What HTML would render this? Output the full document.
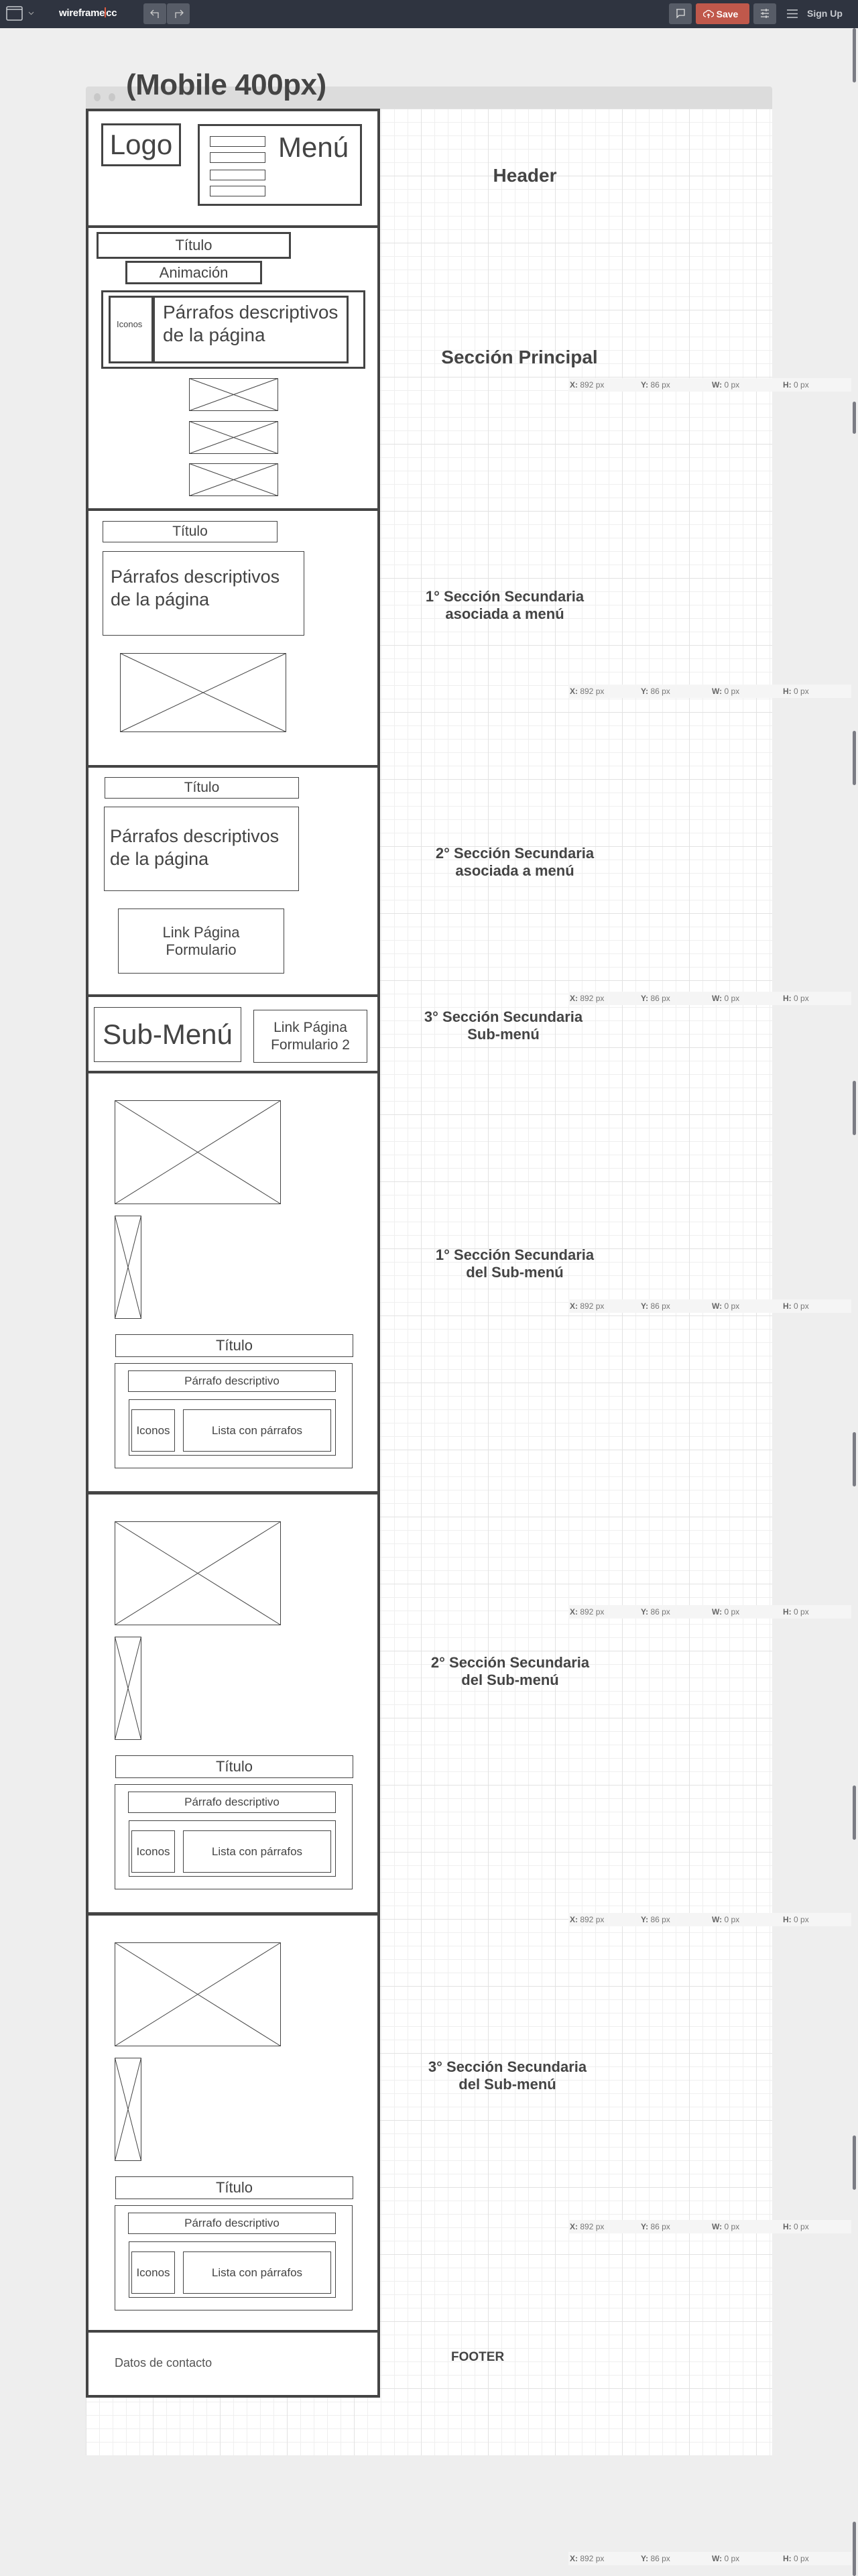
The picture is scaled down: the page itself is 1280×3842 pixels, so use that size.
<!DOCTYPE html>
<html><head><meta charset="utf-8"><style>
*{margin:0;padding:0;box-sizing:border-box}
body{width:1280px;height:3842px;background:#eeeeee;position:relative;overflow:hidden;font-family:"Liberation Sans",Arial,sans-serif;color:#444}
.a{position:absolute}
.top{left:0;top:0;width:1280px;height:42px;background:#2f3440}
.btn{position:absolute;top:5px;height:31px;background:#575c67;border-radius:3px}
.grid{left:128px;top:162px;width:1024px;height:3500px;background-color:#fff;
background-image:linear-gradient(to right,#e2e2e2 1px,transparent 1px),linear-gradient(to bottom,#e2e2e2 1px,transparent 1px),linear-gradient(to right,#efefef 1px,transparent 1px),linear-gradient(to bottom,#efefef 1px,transparent 1px);
background-size:100px 100px,100px 100px,20px 20px,20px 20px}
.sec{position:absolute;left:128px;width:439px;border:4px solid #444;background:#fff}
.b1{position:absolute;border:1px solid #444;background:#fff}
.b3{position:absolute;border:3px solid #444;background:#fff}
.c{display:flex;align-items:center;justify-content:center;text-align:center}
.lbl{position:absolute;font-weight:bold;text-align:center;color:#444;line-height:26px}
.coord{position:absolute;left:848px;width:422px;height:20px;background:#f5f5f5;font-size:12px;color:#777;line-height:20px}
.coord span{position:absolute}
.coord b{color:#666}
.sb{position:absolute;left:1272px;width:5px;background:#7b7c84;border-radius:3px}
svg.ph{position:absolute}
</style></head><body>
<div class="a top">
  <svg class="a" style="left:9px;top:9px" width="26" height="23" viewBox="0 0 26 23"><rect x="1" y="1" width="23" height="20" rx="2" fill="none" stroke="#c8cbd0" stroke-width="1.5"/><line x1="1" y1="5" x2="24" y2="5" stroke="#c8cbd0" stroke-width="1.5"/></svg>
  <svg class="a" style="left:42px;top:17px" width="9" height="6"><path d="M1 1 L4.5 4.5 L8 1" fill="none" stroke="#aaa" stroke-width="1"/></svg>
  <div class="a" style="left:88px;top:11px;font-size:15px;font-weight:bold;color:#fff;letter-spacing:-0.3px">wireframe<span style="display:inline-block;width:2px;height:15px;background:#e05a40;vertical-align:-2px"></span>cc</div>
  <div class="btn" style="left:214px;width:34px"></div><div class="btn" style="left:249px;width:34px"></div>
  <svg class="a" style="left:224px;top:13px" width="16" height="14"><path d="M5 2 L1 6 L5 10 M1 6 H12 V14" fill="none" stroke="#ccc" stroke-width="1.3"/></svg>
  <svg class="a" style="left:258px;top:13px" width="16" height="14"><path d="M11 2 L15 6 L11 10 M15 6 H4 V14" fill="none" stroke="#ccc" stroke-width="1.3"/></svg>
  <div class="btn" style="left:998px;width:34px"></div>
  <svg class="a" style="left:1008px;top:13px" width="15" height="15"><path d="M1 1 H13 V10 H5 L2 13 V1 Z" fill="none" stroke="#ddd" stroke-width="1.3"/></svg>
  <div class="btn c" style="left:1038px;width:80px;background:#c0584b;color:#fff;font-weight:bold;font-size:14px;padding-left:14px">Save</div>
  <svg class="a" style="left:1049px;top:14px" width="16" height="14"><path d="M4 11 A3.5 3.5 0 0 1 4 4 A4.5 4.5 0 0 1 12 4 A3.5 3.5 0 0 1 12 11 M8 13 V7 M6 9 L8 7 L10 9" fill="none" stroke="#fff" stroke-width="1.3"/></svg>
  <div class="btn" style="left:1124px;width:34px"></div>
  <svg class="a" style="left:1134px;top:12px" width="14" height="16"><path d="M1 3 H13 M1 8 H13 M1 13 H13 M9 1 V5 M4 6 V10 M9 11 V15" stroke="#ddd" stroke-width="1.3" fill="none"/></svg>
  <svg class="a" style="left:1174px;top:14px" width="16" height="13"><path d="M0 1 H16 M0 6.5 H16 M0 12 H16" stroke="#c8cbd0" stroke-width="1.5"/></svg>
  <div class="a" style="left:1204px;top:12px;font-size:14px;font-weight:bold;color:#c8cbd0">Sign Up</div>
</div>

<div class="a" style="left:128px;top:129px;width:1024px;height:34px;background:#dcdcdc;border-radius:4px 4px 0 0"></div>
<div class="a" style="left:140px;top:139px;width:10px;height:12px;border-radius:50%;background:#c8c8c8"></div>
<div class="a" style="left:162px;top:139px;width:10px;height:12px;border-radius:50%;background:#c8c8c8"></div>
<div class="a" style="left:188px;top:102px;font-size:44px;font-weight:bold;color:#444;letter-spacing:-0.5px">(Mobile 400px)</div>

<div class="a grid"></div>

<!-- Header -->
<div class="sec" style="top:162px;height:178px"></div>
<div class="b3 c" style="left:151px;top:184px;width:119px;height:64px;font-size:42px">Logo</div>
<div class="b3" style="left:295px;top:185px;width:245px;height:122px"></div>
<div class="b1" style="left:313px;top:203px;width:83px;height:16px"></div>
<div class="b1" style="left:313px;top:227px;width:83px;height:16px"></div>
<div class="b1" style="left:313px;top:253px;width:83px;height:16px"></div>
<div class="b1" style="left:313px;top:277px;width:83px;height:16px"></div>
<div class="a" style="left:415px;top:196px;font-size:42px">Menú</div>

<!-- Main -->
<div class="sec" style="top:336px;height:426px"></div>
<div class="b3 c" style="left:144px;top:346px;width:290px;height:40px;font-size:22px">Título</div>
<div class="b3 c" style="left:187px;top:389px;width:204px;height:35px;font-size:22px">Animación</div>
<div class="b3" style="left:151px;top:433px;width:394px;height:117px"></div>
<div class="b3" style="left:162px;top:441px;width:358px;height:101px"></div>
<div class="a" style="left:226px;top:441px;width:5px;height:101px;background:#444"></div>
<div class="a" style="left:174px;top:476px;font-size:13px">Iconos</div>
<div class="a" style="left:243px;top:449px;font-size:28px;line-height:34px">Párrafos descriptivos<br>de la página</div>
<svg class="ph" style="left:282px;top:564px" width="133" height="49"><rect x=".5" y=".5" width="132" height="48" fill="#fff" stroke="#444"/><path d="M.5 .5 L132.5 48.5 M132.5 .5 L.5 48.5" stroke="#444"/></svg>
<svg class="ph" style="left:282px;top:628px" width="133" height="49"><rect x=".5" y=".5" width="132" height="48" fill="#fff" stroke="#444"/><path d="M.5 .5 L132.5 48.5 M132.5 .5 L.5 48.5" stroke="#444"/></svg>
<svg class="ph" style="left:282px;top:691px" width="133" height="49"><rect x=".5" y=".5" width="132" height="48" fill="#fff" stroke="#444"/><path d="M.5 .5 L132.5 48.5 M132.5 .5 L.5 48.5" stroke="#444"/></svg>

<!-- Sec1 -->
<div class="sec" style="top:758px;height:387px"></div>
<div class="b1 c" style="left:153px;top:777px;width:261px;height:32px;font-size:21px">Título</div>
<div class="b1" style="left:153px;top:822px;width:301px;height:126px;font-size:27px;line-height:34px;padding:20px 0 0 11px;white-space:nowrap">Párrafos descriptivos<br>de la página</div>
<svg class="ph" style="left:179px;top:974px" width="248" height="118"><rect x=".5" y=".5" width="247" height="117" fill="#fff" stroke="#444"/><path d="M.5 .5 L247.5 117.5 M247.5 .5 L.5 117.5" stroke="#444"/></svg>

<!-- Sec2 -->
<div class="sec" style="top:1141px;height:346px"></div>
<div class="b1 c" style="left:156px;top:1159px;width:290px;height:32px;font-size:21px">Título</div>
<div class="b1" style="left:155px;top:1203px;width:291px;height:126px;font-size:27px;line-height:34px;padding:26px 0 0 8px;white-space:nowrap">Párrafos descriptivos<br>de la página</div>
<div class="b1 c" style="left:176px;top:1355px;width:248px;height:97px;font-size:22px;line-height:26px">Link Página<br>Formulario</div>

<!-- Submenu -->
<div class="sec" style="top:1483px;height:118px"></div>
<div class="b1 c" style="left:140px;top:1502px;width:220px;height:82px;font-size:42px">Sub-Menú</div>
<div class="b1 c" style="left:378px;top:1506px;width:170px;height:79px;font-size:21px;line-height:26px">Link Página<br>Formulario 2</div>

<!-- Sub sections -->
<div class="sec" style="top:1597px;height:631px"></div>
<div class="sec" style="top:2225px;height:631px"></div>
<div class="sec" style="top:2853px;height:629px"></div>

<div class="a" style="left:0;top:1597px;width:600px;height:640px">
<svg class="ph" style="left:171px;top:44px" width="248" height="155"><rect x=".5" y=".5" width="247" height="154" fill="#fff" stroke="#444"/><path d="M.5 .5 L247.5 154.5 M247.5 .5 L.5 154.5" stroke="#444"/></svg>
<svg class="ph" style="left:171px;top:216px" width="40" height="154"><rect x=".5" y=".5" width="39" height="153" fill="#fff" stroke="#444"/><path d="M.5 .5 L39.5 153.5 M39.5 .5 L.5 153.5" stroke="#444"/></svg>
<div class="b1 c" style="left:172px;top:393px;width:355px;height:34px;font-size:22px">Título</div>
<div class="b1" style="left:171px;top:436px;width:355px;height:157px"></div>
<div class="b1 c" style="left:191px;top:447px;width:310px;height:32px;font-size:17px">Párrafo descriptivo</div>
<div class="b1" style="left:192px;top:490px;width:309px;height:84px"></div>
<div class="b1 c" style="left:196px;top:505px;width:65px;height:63px;font-size:17px">Iconos</div>
<div class="b1 c" style="left:273px;top:505px;width:221px;height:63px;font-size:17px">Lista con párrafos</div>
</div>
<div class="a" style="left:0;top:2225px;width:600px;height:640px">
<svg class="ph" style="left:171px;top:44px" width="248" height="155"><rect x=".5" y=".5" width="247" height="154" fill="#fff" stroke="#444"/><path d="M.5 .5 L247.5 154.5 M247.5 .5 L.5 154.5" stroke="#444"/></svg>
<svg class="ph" style="left:171px;top:216px" width="40" height="154"><rect x=".5" y=".5" width="39" height="153" fill="#fff" stroke="#444"/><path d="M.5 .5 L39.5 153.5 M39.5 .5 L.5 153.5" stroke="#444"/></svg>
<div class="b1 c" style="left:172px;top:393px;width:355px;height:34px;font-size:22px">Título</div>
<div class="b1" style="left:171px;top:436px;width:355px;height:157px"></div>
<div class="b1 c" style="left:191px;top:447px;width:310px;height:32px;font-size:17px">Párrafo descriptivo</div>
<div class="b1" style="left:192px;top:490px;width:309px;height:84px"></div>
<div class="b1 c" style="left:196px;top:505px;width:65px;height:63px;font-size:17px">Iconos</div>
<div class="b1 c" style="left:273px;top:505px;width:221px;height:63px;font-size:17px">Lista con párrafos</div>
</div>
<div class="a" style="left:0;top:2853px;width:600px;height:640px">
<svg class="ph" style="left:171px;top:44px" width="248" height="155"><rect x=".5" y=".5" width="247" height="154" fill="#fff" stroke="#444"/><path d="M.5 .5 L247.5 154.5 M247.5 .5 L.5 154.5" stroke="#444"/></svg>
<svg class="ph" style="left:171px;top:216px" width="40" height="154"><rect x=".5" y=".5" width="39" height="153" fill="#fff" stroke="#444"/><path d="M.5 .5 L39.5 153.5 M39.5 .5 L.5 153.5" stroke="#444"/></svg>
<div class="b1 c" style="left:172px;top:393px;width:355px;height:34px;font-size:22px">Título</div>
<div class="b1" style="left:171px;top:436px;width:355px;height:157px"></div>
<div class="b1 c" style="left:191px;top:447px;width:310px;height:32px;font-size:17px">Párrafo descriptivo</div>
<div class="b1" style="left:192px;top:490px;width:309px;height:84px"></div>
<div class="b1 c" style="left:196px;top:505px;width:65px;height:63px;font-size:17px">Iconos</div>
<div class="b1 c" style="left:273px;top:505px;width:221px;height:63px;font-size:17px">Lista con párrafos</div>
</div>

<!-- Footer -->
<div class="sec" style="top:3475px;height:101px"></div>
<div class="a" style="left:171px;top:3514px;font-size:18px;color:#555">Datos de contacto</div>

<!-- Right labels -->
<div class="lbl" style="left:633px;top:246px;width:300px;font-size:28px;line-height:32px">Header</div>
<div class="lbl" style="left:625px;top:517px;width:300px;font-size:28px;line-height:32px">Sección Principal</div>
<div class="lbl" style="left:603px;top:877px;width:300px;font-size:22px">1° Sección Secundaria<br>asociada a menú</div>
<div class="lbl" style="left:618px;top:1260px;width:300px;font-size:22px">2° Sección Secundaria<br>asociada a menú</div>
<div class="lbl" style="left:601px;top:1504px;width:300px;font-size:22px">3° Sección Secundaria<br>Sub-menú</div>
<div class="lbl" style="left:618px;top:1859px;width:300px;font-size:22px">1° Sección Secundaria<br>del Sub-menú</div>
<div class="lbl" style="left:611px;top:2467px;width:300px;font-size:22px">2° Sección Secundaria<br>del Sub-menú</div>
<div class="lbl" style="left:607px;top:3070px;width:300px;font-size:22px">3° Sección Secundaria<br>del Sub-menú</div>
<div class="lbl" style="left:673px;top:3503px;font-size:19px;text-align:left">FOOTER</div>

<!-- Coord rows -->
<div class="coord" style="top:564px"><span style="left:2px"><b>X:</b> 892 px</span><span style="left:108px"><b>Y:</b> 86 px</span><span style="left:214px"><b>W:</b> 0 px</span><span style="left:320px"><b>H:</b> 0 px</span></div>
<div class="coord" style="top:1021px"><span style="left:2px"><b>X:</b> 892 px</span><span style="left:108px"><b>Y:</b> 86 px</span><span style="left:214px"><b>W:</b> 0 px</span><span style="left:320px"><b>H:</b> 0 px</span></div>
<div class="coord" style="top:1479px"><span style="left:2px"><b>X:</b> 892 px</span><span style="left:108px"><b>Y:</b> 86 px</span><span style="left:214px"><b>W:</b> 0 px</span><span style="left:320px"><b>H:</b> 0 px</span></div>
<div class="coord" style="top:1938px"><span style="left:2px"><b>X:</b> 892 px</span><span style="left:108px"><b>Y:</b> 86 px</span><span style="left:214px"><b>W:</b> 0 px</span><span style="left:320px"><b>H:</b> 0 px</span></div>
<div class="coord" style="top:2394px"><span style="left:2px"><b>X:</b> 892 px</span><span style="left:108px"><b>Y:</b> 86 px</span><span style="left:214px"><b>W:</b> 0 px</span><span style="left:320px"><b>H:</b> 0 px</span></div>
<div class="coord" style="top:2853px"><span style="left:2px"><b>X:</b> 892 px</span><span style="left:108px"><b>Y:</b> 86 px</span><span style="left:214px"><b>W:</b> 0 px</span><span style="left:320px"><b>H:</b> 0 px</span></div>
<div class="coord" style="top:3311px"><span style="left:2px"><b>X:</b> 892 px</span><span style="left:108px"><b>Y:</b> 86 px</span><span style="left:214px"><b>W:</b> 0 px</span><span style="left:320px"><b>H:</b> 0 px</span></div>
<div class="coord" style="top:3806px"><span style="left:2px"><b>X:</b> 892 px</span><span style="left:108px"><b>Y:</b> 86 px</span><span style="left:214px"><b>W:</b> 0 px</span><span style="left:320px"><b>H:</b> 0 px</span></div>

<!-- scrollbars -->
<div class="sb" style="top:42px;height:81px"></div>
<div class="sb" style="top:599px;height:48px"></div>
<div class="sb" style="top:1090px;height:81px"></div>
<div class="sb" style="top:1612px;height:81px"></div>
<div class="sb" style="top:2136px;height:81px"></div>
<div class="sb" style="top:2663px;height:81px"></div>
<div class="sb" style="top:3185px;height:81px"></div>
<div class="sb" style="top:3761px;height:81px"></div>
</body></html>
